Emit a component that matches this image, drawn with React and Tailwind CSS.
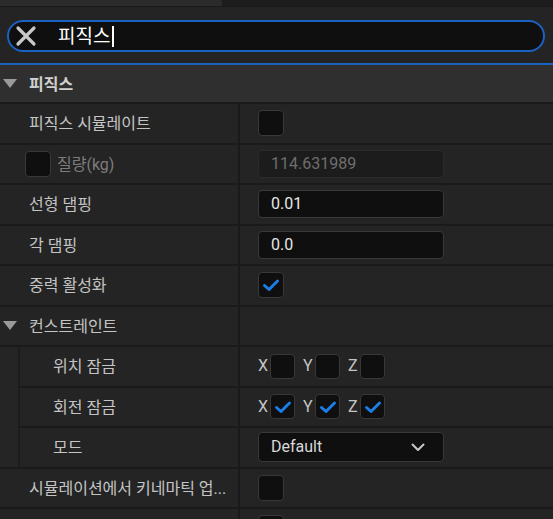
import { useState } from 'react'

const FONT = { fontFamily: 'Roboto, "Noto Sans CJK KR", sans-serif' }

function CheckMark() {
  return (
    <svg width="20" height="20" viewBox="0 0 20 20" fill="none">
      <path d="M3.5 10.5 L8 14.5 L16.5 6" stroke="#1a7ee6" strokeWidth="3" strokeLinecap="round" strokeLinejoin="round" />
    </svg>
  )
}

function Checkbox({ checked, size = 'w-[26px] h-[26px]' }) {
  return (
    <div className={`${size} flex items-center justify-center rounded-[4px] border border-[#383838] bg-[#0f0f0f]`}>
      {checked && <CheckMark />}
    </div>
  )
}

function Triangle() {
  return (
    <svg width="14" height="10" viewBox="0 0 14 10" className="shrink-0">
      <path d="M0 0 L14 0 L7 9 Z" fill="#9a9a9a" />
    </svg>
  )
}

function NumberInput({ value, disabled }) {
  return (
    <div
      className={`w-[186px] h-[28px] flex items-center px-[12px] rounded-[4px] border text-[16px] ${
        disabled ? 'bg-[#1c1c1c] border-[#2a2a2a] text-[#6e6e6e]' : 'bg-[#0f0f0f] border-[#383838] text-[#e6e6e6]'
      }`}
    >
      {value}
    </div>
  )
}

function Row({ label, labelClass = 'text-[#c4c4c4]', width = 'w-[238px]', pad = 'pl-[29px]', children, left }) {
  return (
    <div className="flex h-[38.5px] bg-[#242424]">
      <div className={`${width} ${pad} shrink-0 flex items-center gap-[6px] text-[16px] ${labelClass} whitespace-nowrap`}>
        {left}
        <span className="pt-[2px]">{label}</span>
      </div>
      <div className="w-[2px] shrink-0 bg-[#1a1a1a]" />
      <div className="flex-1 flex items-center pl-[18px]">{children}</div>
    </div>
  )
}

function Axis({ checked }) {
  return (
    <div className="flex items-center gap-[8px]">
      {['X', 'Y', 'Z'].map((a) => (
        <div key={a} className="flex items-center">
          <span className="text-[16px] text-[#c4c4c4] w-[12px]">{a}</span>
          <Checkbox checked={checked} size="w-[25px] h-[25px]" />
        </div>
      ))}
    </div>
  )
}

export default function App() {
  const [query] = useState('피직스')

  return (
    <div className="w-[553px] h-[519px] overflow-hidden bg-[#1a1a1a]" style={FONT}>
      <div className="flex h-[7px] border-b border-[#1a1a1a]">
        <div className="w-[222px] bg-[#2b2b2b]" />
        <div className="flex-1 bg-[#1c1c1c]" />
      </div>

      <div className="bg-[#242424] pt-[13px] pb-[11px] pl-[7px] pr-[8px]">
        <div className="h-[32px] rounded-full border-2 border-[#1b62c0] bg-[#0f0f0f] flex items-center">
          <svg width="22" height="22" viewBox="0 0 22 22" className="ml-[6px]">
            <path d="M3 3 L19 19 M19 3 L3 19" stroke="#c8c8c8" strokeWidth="3.2" strokeLinecap="round" />
          </svg>
          <span className="ml-[21px] text-[19px] text-white leading-none pt-[1px]">{query}</span>
          <span className="ml-[2px] w-[2px] h-[21px] bg-white" />
        </div>
      </div>

      <div className="h-[2px] bg-[#1b62c0]" />

      <div className="h-[37px] bg-[#2f2f2f] flex items-center pl-[3px] gap-[12px]">
        <Triangle />
        <span className="text-[16px] font-semibold text-[#d0d0d0] pt-[2px]">피직스</span>
      </div>

      <div className="flex flex-col gap-[2px] pt-[2px] bg-[#1a1a1a]">
        <Row label="피직스 시뮬레이트">
          <Checkbox />
        </Row>
        <Row
          label="질량(kg)"
          labelClass="text-[#7c7c7c]"
          pad="pl-[25px]"
          left={<Checkbox />}
        >
          <NumberInput value="114.631989" disabled />
        </Row>
        <Row label="선형 댐핑">
          <NumberInput value="0.01" />
        </Row>
        <Row label="각 댐핑">
          <NumberInput value="0.0" />
        </Row>
        <Row label="중력 활성화">
          <Checkbox checked />
        </Row>
        <Row label="컨스트레인트" pad="pl-[3px]" left={<span className="mr-[6px] flex"><Triangle /></span>} />

        <div className="flex">
          <div className="w-[20px] shrink-0 bg-[#252525] border-r-2 border-[#1c1c1c]" />
          <div className="flex-1 flex flex-col gap-[2px]">
            <Row label="위치 잠금" width="w-[218px]" pad="pl-[33px]">
              <Axis />
            </Row>
            <Row label="회전 잠금" width="w-[218px]" pad="pl-[33px]">
              <Axis checked />
            </Row>
            <Row label="모드" width="w-[218px]" pad="pl-[33px]">
              <div className="w-[186px] h-[30px] flex items-center justify-between pl-[12px] pr-[18px] rounded-[4px] border border-[#383838] bg-[#0f0f0f] text-[16px] text-[#d8d8d8]">
                <span>Default</span>
                <svg width="14" height="9" viewBox="0 0 14 9">
                  <path d="M1.5 1.5 L7 7 L12.5 1.5" stroke="#c8c8c8" strokeWidth="2" fill="none" strokeLinecap="round" strokeLinejoin="round" />
                </svg>
              </div>
            </Row>
          </div>
        </div>

        <Row label="시뮬레이션에서 키네마틱 업...">
          <Checkbox />
        </Row>
        <Row label="">
          <Checkbox />
        </Row>
      </div>
    </div>
  )
}
